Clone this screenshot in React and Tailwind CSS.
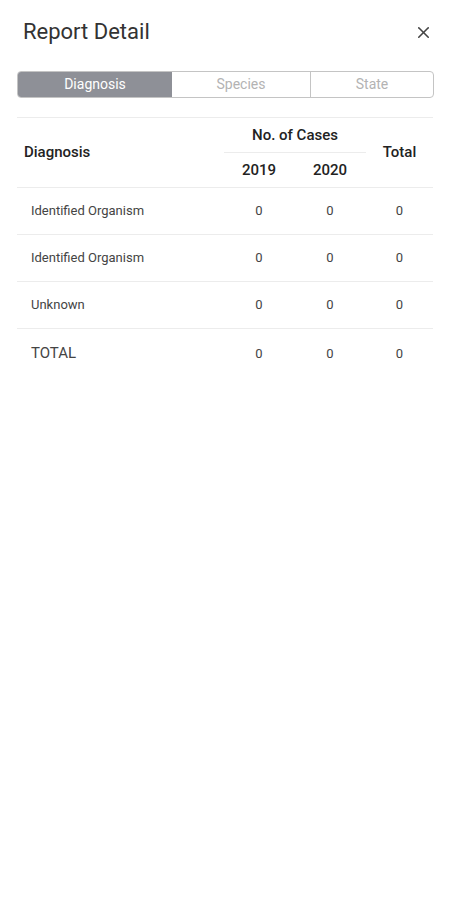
import { X } from 'lucide-react'

const rows = [
  { name: 'Identified Organism', y2019: 0, y2020: 0, total: 0 },
  { name: 'Identified Organism', y2019: 0, y2020: 0, total: 0 },
  { name: 'Unknown', y2019: 0, y2020: 0, total: 0 },
]

export default function App() {
  return (
    <div className="w-[450px] h-[900px] bg-white font-['Roboto',sans-serif] text-[#333]">
      {/* Header */}
      <div className="flex items-center justify-between pl-[23px] pr-[17px] pt-[18px] h-[46px]">
        <h1 className="text-[22px] leading-none text-[#333]">Report Detail</h1>
        <X size={19} strokeWidth={2} className="text-[#444]" />
      </div>

      {/* Tabs */}
      <div className="mx-[17px] mt-[25px] flex h-[27px] w-[417px] rounded-[4px] border border-[#c4c4c4] overflow-hidden text-[14px]">
        <div className="w-[154px] flex items-center justify-center bg-[#8e9097] text-white">Diagnosis</div>
        <div className="w-[139px] flex items-center justify-center text-[#b3b3b3] border-r border-[#c4c4c4]">Species</div>
        <div className="flex-1 flex items-center justify-center text-[#b3b3b3]">State</div>
      </div>

      {/* Table */}
      <table className="mx-[17px] mt-[19px] w-[416px] border-collapse table-fixed">
        <colgroup>
          <col className="w-[207px]" />
          <col className="w-[70px]" />
          <col className="w-[72px]" />
          <col className="w-[67px]" />
        </colgroup>
        <thead>
          <tr className="border-t border-[#ececec]">
            <th rowSpan={2} className="text-left font-medium text-[15px] text-[#222] pl-[7px] border-b border-[#ececec]">Diagnosis</th>
            <th colSpan={2} className="h-[35px] font-medium text-[15px] text-[#222] pt-[1px]">
              <div className="flex h-full items-center justify-center border-b border-[#ececec]">No. of Cases</div>
            </th>
            <th rowSpan={2} className="font-medium text-[15px] text-[#222] border-b border-[#ececec]">Total</th>
          </tr>
          <tr className="border-b border-[#ececec]">
            <th className="h-[35px] font-medium text-[15px] text-[#222]">2019</th>
            <th className="h-[35px] font-medium text-[15px] text-[#222]">2020</th>
          </tr>
        </thead>
        <tbody>
          {rows.map((r, i) => (
            <tr key={i} className="border-b border-[#ececec] h-[47px] text-[13px] text-[#444]">
              <td className="pl-[14px]">{r.name}</td>
              <td className="text-center">{r.y2019}</td>
              <td className="text-center">{r.y2020}</td>
              <td className="text-center">{r.total}</td>
            </tr>
          ))}
          <tr className="h-[49px] text-[13px] text-[#444]">
            <td className="pl-[14px] text-[15px]">TOTAL</td>
            <td className="text-center">0</td>
            <td className="text-center">0</td>
            <td className="text-center">0</td>
          </tr>
        </tbody>
      </table>
    </div>
  )
}
